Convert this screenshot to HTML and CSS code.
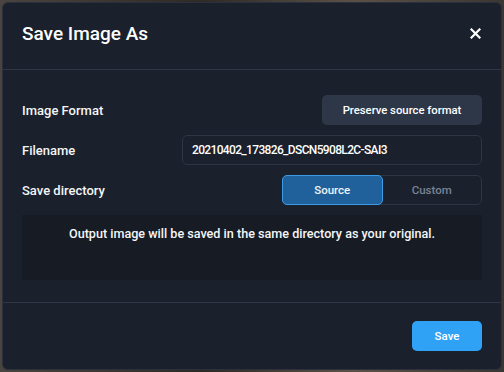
FILE: index.html
```html
<!DOCTYPE html>
<html>
<head>
<meta charset="utf-8">
<link rel="stylesheet" href="styles.css">
</head>
<body>
<div class="modal">
  <header class="head">
    <h1 class="title">Save Image As</h1>
    <button class="close" aria-label="Close">
      <svg width="11" height="11" viewBox="0 0 11 11"><path d="M1.5 1.5 L9.5 9.5 M9.5 1.5 L1.5 9.5" stroke="#fff" stroke-width="2.2" stroke-linecap="square"/></svg>
    </button>
  </header>
  <section class="body">
    <div class="row">
      <span class="label">Image Format</span>
      <button class="btn-gray">Preserve source format</button>
    </div>
    <div class="row">
      <span class="label">Filename</span>
      <div class="input">20210402_173826_DSCN5908L2C-SAI3</div>
    </div>
    <div class="row">
      <span class="label">Save directory</span>
      <div class="seg">
        <button class="seg-item active">Source</button>
        <button class="seg-item">Custom</button>
      </div>
    </div>
    <div class="info">Output image will be saved in the same directory as your original.</div>
  </section>
  <footer class="foot">
    <button class="save">Save</button>
  </footer>
</div>
</body>
</html>
```
FILE: styles.css
```css
html, body { margin: 0; padding: 0; }
body {
  width: 504px; height: 372px; overflow: hidden;
  background: linear-gradient(90deg, #4a4440 0%, #2e2a28 40%, #5a5048 70%, #3a3633 100%);
  font-family: Roboto, "Noto Sans", sans-serif;
  color: #fff;
}
.modal {
  box-sizing: border-box;
  margin: 2px 0 0 2px;
  width: 500px; height: 368px;
  background: #1a202c;
  border: 1px solid #2a303c;
  border-radius: 6px;
  display: flex; flex-direction: column;
}
.head {
  height: 67px;
  box-sizing: border-box;
  display: flex; align-items: center; justify-content: space-between;
  padding: 0 19px 5px 19px;
  border-bottom: 1px solid #2d3748;
}
.title { margin: 0; font-size: 19px; font-weight: 500; }
.close {
  background: none; border: 0; padding: 0; width: 11px; height: 11px; display: flex; margin-right: 1px;
}
.body {
  padding: 25px 19px 22px 19px;
  display: flex; flex-direction: column; gap: 10px;
  border-bottom: 1px solid #2d3748;
}
.row { display: flex; align-items: center; justify-content: space-between; height: 30px; }
.label { font-size: 13px; font-weight: 500; color: #f4f6f8; }
.btn-gray {
  width: 160px; height: 30px; border: 0; border-radius: 5px;
  background: #2d3748; color: #fff;
  font-family: inherit; font-size: 11.3px; font-weight: 500;
}
.input {
  box-sizing: border-box;
  width: 300px; height: 30px; border: 1px solid #2d3644; border-radius: 5px;
  padding: 0 9px; display: flex; align-items: center;
  font-size: 12px; letter-spacing: -0.65px; font-weight: 500; color: #fff;
}
.seg {
  box-sizing: border-box;
  width: 200px; height: 30px; display: flex;
  border: 1px solid #2d3644; border-radius: 5px;
}
.seg-item {
  flex: 1; border: 0; background: none; color: #7a8494;
  font-family: inherit; font-size: 11.5px; font-weight: 500; padding: 0;
}
.seg-item.active {
  background: #21619b; color: #eef4fa;
  border: 1px solid #3d9ae6; border-radius: 5px; margin: -1px 0 -1px -1px;
}
.info {
  height: 65px; box-sizing: border-box;
  background: #161b24;
  padding-top: 11px;
  text-align: center;
  font-size: 12.6px; font-weight: 500; color: #f4f6f8;
}
.foot {
  flex: 1;
  display: flex; justify-content: flex-end; align-items: flex-start;
  padding: 18px 19px 0 19px;
}
.save {
  width: 70px; height: 30px; border: 0; border-radius: 5px;
  background: #2fa2f5; color: #fff;
  font-family: inherit; font-size: 11.5px; font-weight: 500;
}
```
